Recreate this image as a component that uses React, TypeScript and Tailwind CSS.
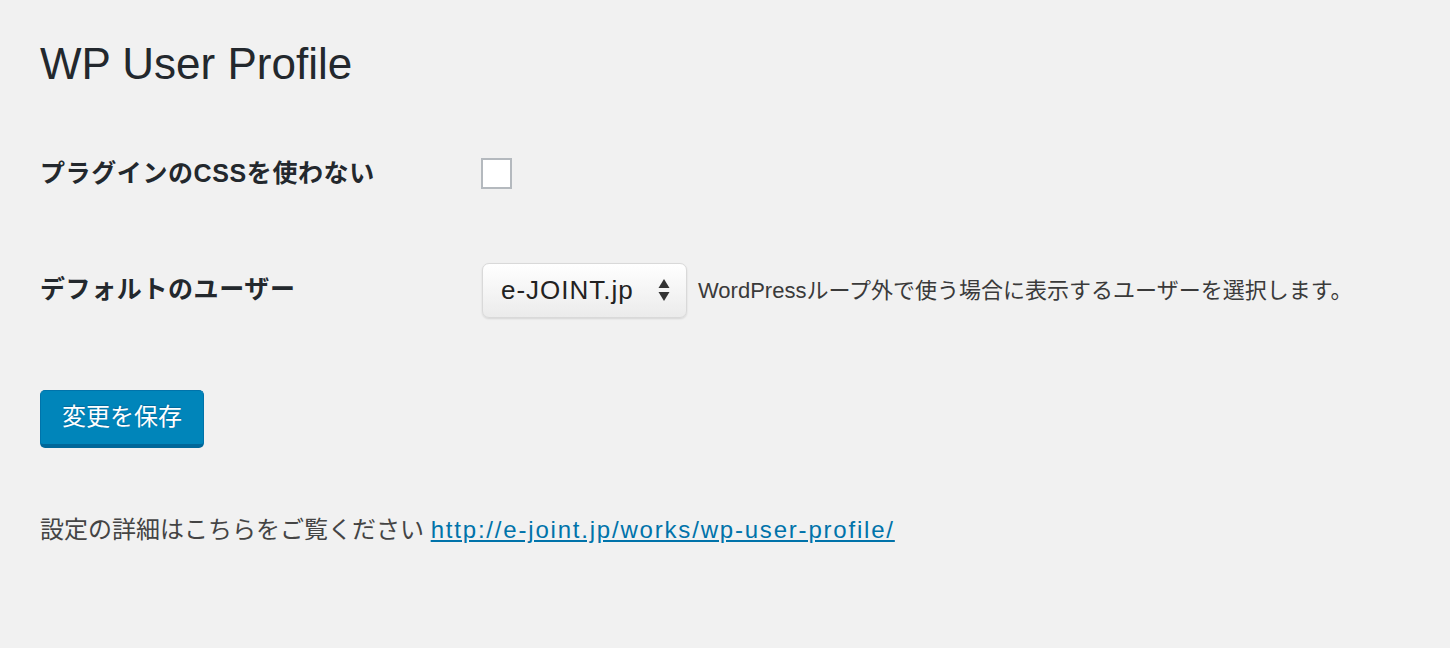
import React from 'react';

const font = { fontFamily: '"Liberation Sans", "Noto Sans CJK JP", sans-serif' };

export default function App() {
  return (
    <div className="min-h-[648px] w-full bg-[#f1f1f1] text-[#23282d]" style={font}>
      <div className="px-[40px] pt-[38px]">
        <h1 className="text-[44px] leading-[52px] font-normal text-[#23282d]">WP User Profile</h1>

        {/* Settings rows */}
        <div className="mt-[65px] flex items-center">
          <div className="w-[441px] text-[25px] font-bold tracking-[0.6px]">プラグインのCSSを使わない</div>
          <div className="h-[31px] w-[31px] border-[2px] border-[#b4b9be] bg-white" />
        </div>

        <div className="mt-[70px] flex items-center">
          <div className="w-[442px] text-[25px] font-bold tracking-[0.6px]">デフォルトのユーザー</div>
          <div className="flex h-[55px] w-[205px] items-center justify-between rounded-[7px] border border-[#d9d9d9] bg-gradient-to-b from-[#ffffff] to-[#ebebeb] pl-[18px] pr-[16px] shadow-[0_1px_2px_rgba(0,0,0,0.12)]">
            <span className="text-[26px] tracking-[1px] text-[#222]">e-JOINT.jp</span>
            <svg width="12" height="24" viewBox="0 0 12 24">
              <path d="M6 1 L11.5 10 L0.5 10 Z" fill="#333" />
              <path d="M6 23 L11.5 14 L0.5 14 Z" fill="#333" />
            </svg>
          </div>
          <span className="ml-[11px] text-[22px] text-[#3a3a3a]">WordPressループ外で使う場合に表示するユーザーを選択します。</span>
        </div>

        <button className="mt-[72px] flex h-[58px] w-[164px] items-center justify-center rounded-[5px] border border-[#0073aa] border-b-[4px] border-b-[#006799] bg-[#0085ba] text-[24px] text-white [text-shadow:0_-1px_1px_#006799]">
          変更を保存
        </button>

        <p className="mt-[66px] text-[24px] leading-[32px] text-[#444]">
          設定の詳細はこちらをご覧ください{' '}
          <a href="#" className="tracking-[1.8px] text-[#0073aa] underline">http://e-joint.jp/works/wp-user-profile/</a>
        </p>
      </div>
    </div>
  );
}
